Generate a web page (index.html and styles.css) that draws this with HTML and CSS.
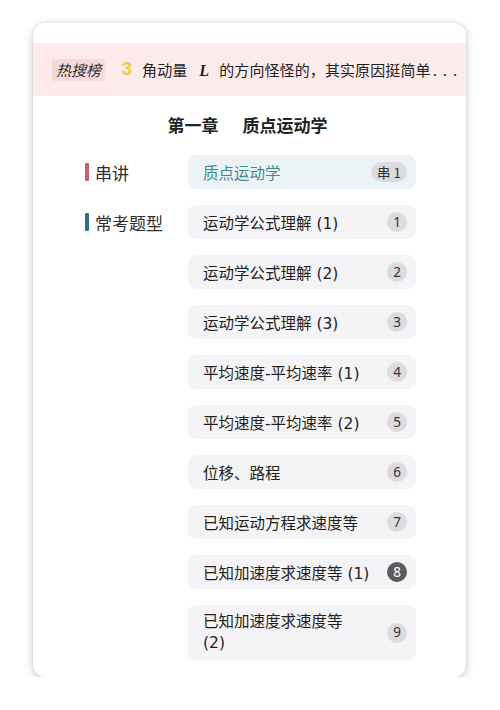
FILE: index.html
```html
<!DOCTYPE html>
<html lang="zh">
<head>
<meta charset="utf-8">
<link rel="stylesheet" href="styles.css">
</head>
<body>
<div class="card">
  <div class="banner">
    <span class="hot">热搜榜</span>
    <span class="rank">3</span>
    <span class="headline">角动量<i class="sym">L</i>的方向怪怪的，其实原因挺简单<span class="dots">...</span></span>
  </div>
  <div class="title"><span>第一章</span><span class="title-name">质点运动学</span></div>
  <div class="grid">
    <div class="label red"><span class="bar"></span>串讲</div>
    <div class="item active"><span class="txt">质点运动学</span><span class="pill">串 1</span></div>
    <div class="label teal"><span class="bar"></span>常考题型</div>
    <div class="item"><span class="txt">运动学公式理解 (1)</span><span class="num">1</span></div>
    <div class="item"><span class="txt">运动学公式理解 (2)</span><span class="num">2</span></div>
    <div class="item"><span class="txt">运动学公式理解 (3)</span><span class="num">3</span></div>
    <div class="item"><span class="txt">平均速度-平均速率 (1)</span><span class="num">4</span></div>
    <div class="item"><span class="txt">平均速度-平均速率 (2)</span><span class="num">5</span></div>
    <div class="item"><span class="txt">位移、路程</span><span class="num">6</span></div>
    <div class="item"><span class="txt">已知运动方程求速度等</span><span class="num">7</span></div>
    <div class="item"><span class="txt">已知加速度求速度等 (1)</span><span class="num dark">8</span></div>
    <div class="item tall"><span class="txt">已知加速度求速度等<br>(2)</span><span class="num">9</span></div>
  </div>
</div>
</body>
</html>
```

FILE: styles.css
```css
* { box-sizing: border-box; }
html, body {
  margin: 0;
  padding: 0;
  background: #ffffff;
}
body {
  font-family: "Noto Sans CJK SC", "Noto Sans", sans-serif;
  color: #2b2b2b;
  padding-top: 23px;
  padding-left: 33px;
}
.card {
  width: 433px;
  height: 654px;
  background: #ffffff;
  border-radius: 12px;
  box-shadow: 0 2px 8px rgba(0, 0, 0, 0.22), 0 0 2px rgba(0, 0, 0, 0.12);
  padding-top: 20px;
  overflow: hidden;
}
.banner {
  height: 53px;
  background: #fdeaea;
  display: flex;
  align-items: center;
  padding-left: 19px;
}
.hot {
  display: inline-block;
  background: #f6d9da;
  font-style: italic;
  font-size: 15px;
  color: #2e2e2e;
  height: 22px;
  line-height: 22px;
  padding: 0 4px;
  border-radius: 2px;
}
.rank {
  font-family: "Liberation Sans", sans-serif;
  font-weight: 700;
  font-size: 18px;
  color: #eccb45;
  margin-left: 17px;
  margin-right: 10px;
}
.headline {
  font-size: 15px;
  color: #222;
  white-space: nowrap;
  letter-spacing: 0.1px;
}
.sym {
  font-family: "Liberation Serif", serif;
  font-weight: 700;
  font-style: italic;
  font-size: 16px;
  margin: 0 10px 0 12px;
}
.dots {
  letter-spacing: 6px;
  margin-left: 2px;
}
.title {
  text-align: center;
  font-weight: 700;
  font-size: 17px;
  color: #222;
  margin-top: 17px;
  height: 24px;
  line-height: 24px;
  padding-right: 4px;
}
.title-name { margin-left: 24px; }
.grid {
  display: grid;
  grid-template-columns: 103px 228px;
  column-gap: 0;
  row-gap: 16px;
  margin-top: 18px;
  margin-left: 52px;
}
.label {
  grid-column: 1;
  display: flex;
  align-items: center;
  font-size: 17px;
  color: #2e2e2e;
  height: 34px;
}
.bar {
  width: 4px;
  height: 18px;
  margin-right: 6px;
  border-radius: 1px;
}
.red .bar { background: #c96168; }
.teal .bar { background: #2c737b; }
.item {
  grid-column: 2;
  height: 34px;
  background: #f4f3f5;
  border-radius: 8px;
  display: flex;
  align-items: center;
  justify-content: space-between;
  padding: 0 9px 0 15px;
  font-size: 15.5px;
  color: #1f1f1f;
}
.txt {
  font-family: "DejaVu Sans", "Noto Sans CJK SC", sans-serif;
}
.item.active {
  background: #ebf3f6;
  color: #3e8a8c;
}
.item.tall {
  height: 55px;
  line-height: 21px;
}
.num, .pill {
  display: inline-flex;
  align-items: center;
  justify-content: center;
  height: 20px;
  min-width: 20px;
  border-radius: 10px;
  background: #dcdbdd;
  color: #333;
  font-size: 13.5px;
  font-family: "Noto Sans", "Noto Sans CJK SC", sans-serif;
  white-space: nowrap;
}
.pill {
  padding: 0 6px;
  font-family: "Noto Sans CJK SC", sans-serif;
}
.num.dark {
  background: #5b5b5b;
  color: #ffffff;
}
```
